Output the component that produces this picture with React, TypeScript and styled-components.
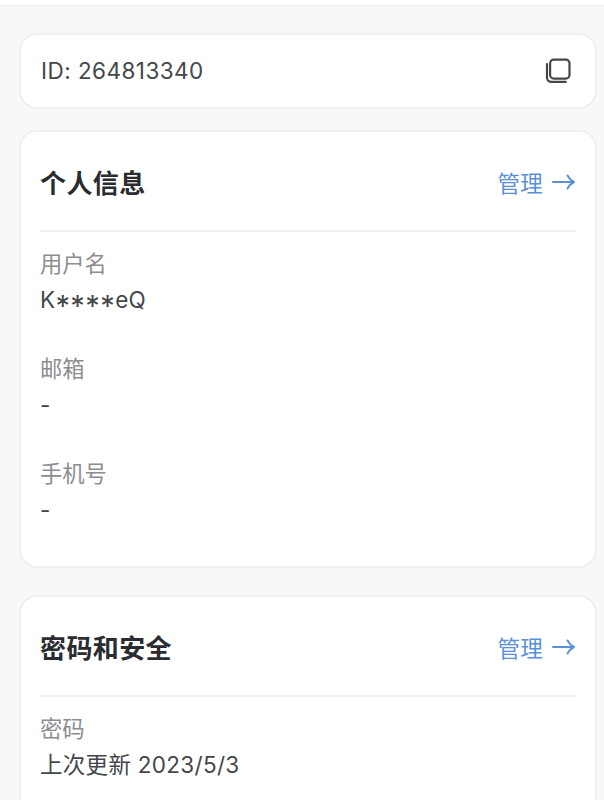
import React from "react";
import styled, { createGlobalStyle } from "styled-components";

const GlobalStyle = createGlobalStyle`
  html, body {
    margin: 0;
    padding: 0;
    height: 800px;
    overflow: hidden;
    background: #f7f8fa;
    font-family: Inter, "Noto Sans CJK SC", "Noto Sans", sans-serif;
  }
`;

const Page = styled.div`
  width: 604px;
  height: 800px;
  overflow: hidden;
  background: #f7f8fa;
`;

const TopBar = styled.div`
  height: 5px;
  background: #ffffff;
  border-bottom: 1px solid #e9eaed;
`;

const Content = styled.div`
  padding: 27px 7px 0 19px;
`;

const Card = styled.section`
  background: #fff;
  border: 2px solid #eff0f2;
  border-radius: 18px;
  box-sizing: border-box;
`;

const IdCard = styled(Card)`
  height: 76px;
  margin-bottom: 21px;
  padding: 0 24px 0 20px;
  display: flex;
  align-items: center;
  justify-content: space-between;
`;

const IdText = styled.span`
  font-size: 22.5px;
  letter-spacing: 0.45px;
  color: #45474b;
  margin-bottom: 2px;
`;

const InfoCard = styled(Card)<{ $height: number }>`
  padding: 0 19px;
  margin-bottom: 27px;
  height: ${(p) => p.$height}px;
`;

const CardHead = styled.div`
  height: 98px;
  display: flex;
  align-items: center;
  justify-content: space-between;
  border-bottom: 2px solid #eeeff1;
`;

const CardTitle = styled.h2`
  margin: 0;
  font-size: 26px;
  letter-spacing: 0.4px;
  font-weight: 700;
  color: #2a2c2f;
`;

const ManageLink = styled.a`
  display: flex;
  align-items: center;
  gap: 9px;
  margin-top: 2px;
  font-size: 22.5px;
  letter-spacing: 0.2px;
  color: #5a90d8;
  text-decoration: none;
`;

const FieldList = styled.div`
  padding-top: 17px;
  display: flex;
  flex-direction: column;
  gap: 39px;
`;

const Field = styled.div`
  display: flex;
  flex-direction: column;
  gap: 6px;
`;

const FieldLabel = styled.div`
  font-size: 22.3px;
  line-height: 30px;
  color: #8b8d91;
`;

const FieldValue = styled.div`
  font-size: 22.5px;
  letter-spacing: 0.3px;
  line-height: 30px;
  color: #45474b;
`;

const Mask = styled.span`
  font-size: 29px;
  line-height: 0;
  letter-spacing: 0.4px;
  vertical-align: -8px;
`;

const CopyIcon = () => (
  <svg width="26" height="26" viewBox="0 0 26 26" fill="none" stroke="#45474b" strokeWidth="2.2">
    <rect x="5.1" y="1.6" width="19.4" height="19" rx="3.6" />
    <path d="M2 6.2v13.3a4.4 4.4 0 0 0 4.4 4.4h14.4" strokeLinecap="round" />
  </svg>
);

const ArrowIcon = () => (
  <svg width="24" height="20" viewBox="0 0 24 20" fill="none" stroke="#5a90d8" strokeWidth="2" strokeLinecap="round" strokeLinejoin="round">
    <path d="M1 10h21M15.5 3.5c1.5 3 3.5 5 6.5 6.5-3 1.5-5 3.5-6.5 6.5" />
  </svg>
);

const Manage = () => (
  <ManageLink href="#">
    管理
    <ArrowIcon />
  </ManageLink>
);

const App = () => {
  return (
    <Page>
      <GlobalStyle />
      <TopBar />
      <Content>
        <IdCard>
          <IdText>ID: 264813340</IdText>
          <CopyIcon />
        </IdCard>
        <InfoCard $height={438}>
          <CardHead>
            <CardTitle>个人信息</CardTitle>
            <Manage />
          </CardHead>
          <FieldList>
            <Field>
              <FieldLabel>用户名</FieldLabel>
              <FieldValue>
                K<Mask>****</Mask>eQ
              </FieldValue>
            </Field>
            <Field>
              <FieldLabel>邮箱</FieldLabel>
              <FieldValue>-</FieldValue>
            </Field>
            <Field>
              <FieldLabel>手机号</FieldLabel>
              <FieldValue>-</FieldValue>
            </Field>
          </FieldList>
        </InfoCard>
        <InfoCard $height={300}>
          <CardHead>
            <CardTitle>密码和安全</CardTitle>
            <Manage />
          </CardHead>
          <FieldList>
            <Field>
              <FieldLabel>密码</FieldLabel>
              <FieldValue>上次更新 2023/5/3</FieldValue>
            </Field>
          </FieldList>
        </InfoCard>
      </Content>
    </Page>
  );
};

export default App;
